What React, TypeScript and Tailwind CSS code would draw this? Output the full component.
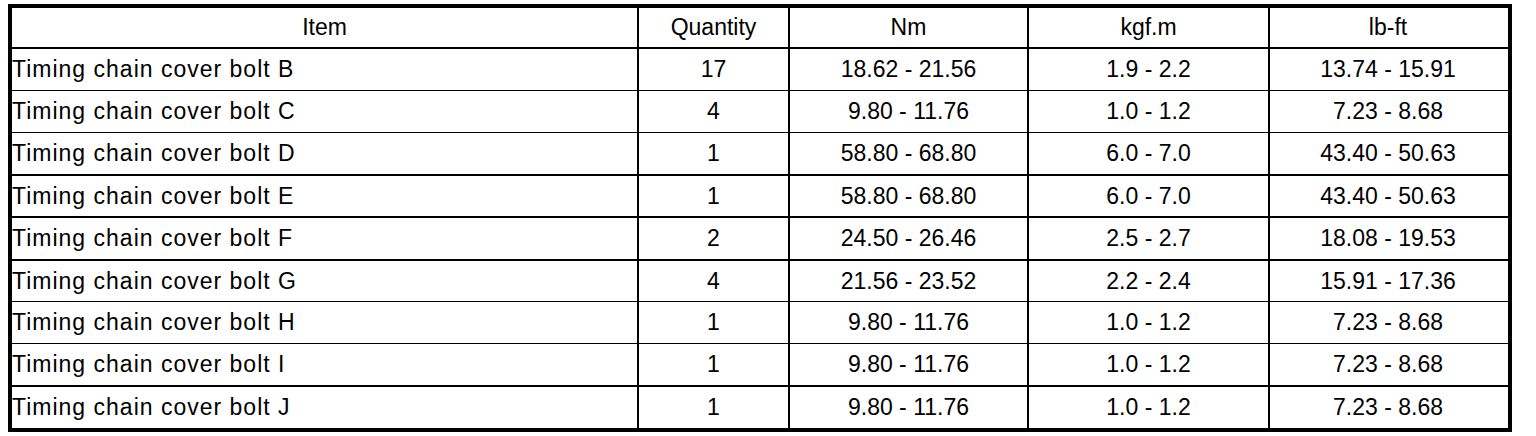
const headers = ['Item', 'Quantity', 'Nm', 'kgf.m', 'lb-ft'];

const rows: string[][] = [
  ['Timing chain cover bolt B', '17', '18.62 - 21.56', '1.9 - 2.2', '13.74 - 15.91'],
  ['Timing chain cover bolt C', '4', '9.80 - 11.76', '1.0 - 1.2', '7.23 - 8.68'],
  ['Timing chain cover bolt D', '1', '58.80 - 68.80', '6.0 - 7.0', '43.40 - 50.63'],
  ['Timing chain cover bolt E', '1', '58.80 - 68.80', '6.0 - 7.0', '43.40 - 50.63'],
  ['Timing chain cover bolt F', '2', '24.50 - 26.46', '2.5 - 2.7', '18.08 - 19.53'],
  ['Timing chain cover bolt G', '4', '21.56 - 23.52', '2.2 - 2.4', '15.91 - 17.36'],
  ['Timing chain cover bolt H', '1', '9.80 - 11.76', '1.0 - 1.2', '7.23 - 8.68'],
  ['Timing chain cover bolt I', '1', '9.80 - 11.76', '1.0 - 1.2', '7.23 - 8.68'],
  ['Timing chain cover bolt J', '1', '9.80 - 11.76', '1.0 - 1.2', '7.23 - 8.68'],
];

// the scan's rule lines are not all the same weight
const rowStyle = [
  'h-[42px] border-b',
  'h-[42px] border-b',
  'h-[43px] border-b-2',
  'h-[42px] border-b-2',
  'h-[43px] border-b-2',
  'h-[41px] border-b',
  'h-[42px] border-b',
  'h-[43px] border-b-2',
  'h-[41px] border-b-0',
];

const cols = 'grid grid-cols-[627px_151px_239px_241px_236px]';

export default function App() {
  return (
    <div className="bg-white w-[1536px] h-[436px] pt-1 pl-2 font-['Liberation_Sans',Arial,sans-serif] text-black">
      <div className="w-[1504px] border-4 border-black">
        {/* header */}
        <div className={`${cols} h-[41px] border-b-2 border-black`}>
          {headers.map((h, i) => (
            <div
              key={h}
              className={`flex items-center justify-center text-[23px] ${i < 4 ? 'border-r-2 border-black' : ''}`}
            >
              {h}
            </div>
          ))}
        </div>

        {/* body */}
        {rows.map((r, ri) => (
          <div key={r[0]} className={`${cols} ${rowStyle[ri]} border-black`}>
            {r.map((c, ci) => (
              <div
                key={ci}
                className={`flex items-center text-[23px] ${
                  ci === 0 ? 'justify-start tracking-[1px]' : 'justify-center'
                } ${ci < 4 ? 'border-r-2 border-black' : ''}`}
              >
                {c}
              </div>
            ))}
          </div>
        ))}
      </div>
    </div>
  );
}
